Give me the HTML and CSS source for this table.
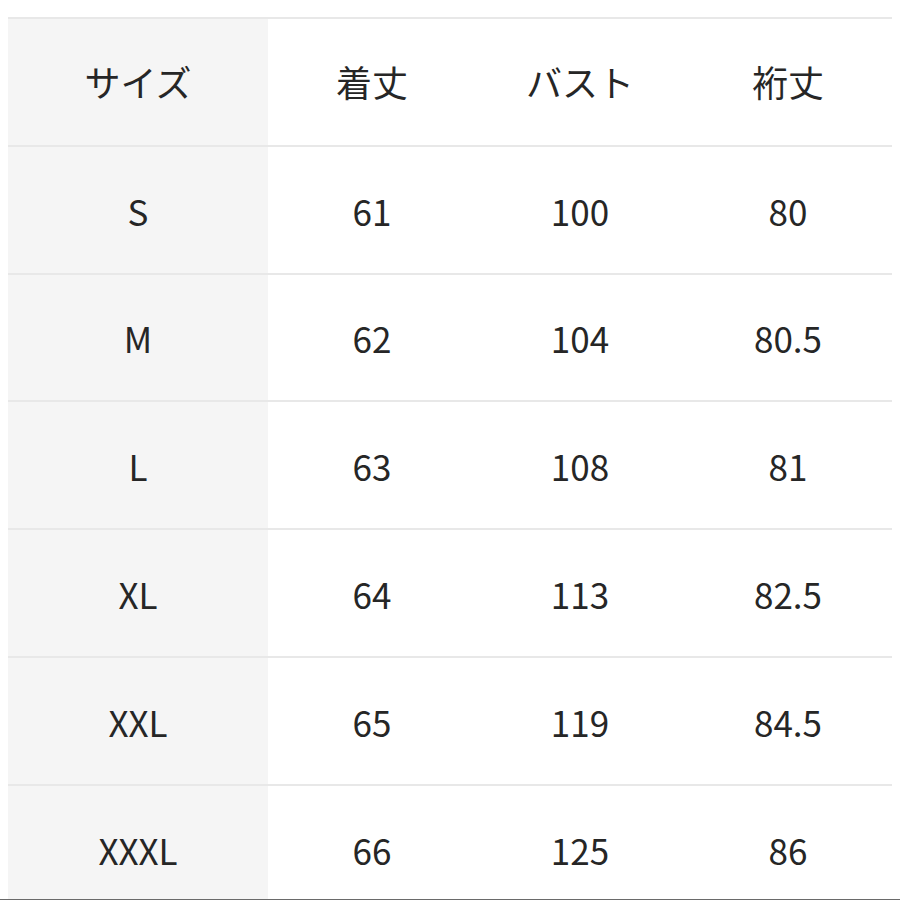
FILE: index.html
```html
<!DOCTYPE html>
<html lang="ja">
<head>
<meta charset="utf-8">
<link rel="stylesheet" href="styles.css">
</head>
<body>
<div class="table">
  <div class="row head"><div class="cell size">サイズ</div><div class="cell">着丈</div><div class="cell">バスト</div><div class="cell">裄丈</div></div>
  <div class="row"><div class="cell size">S</div><div class="cell">61</div><div class="cell">100</div><div class="cell">80</div></div>
  <div class="row"><div class="cell size">M</div><div class="cell">62</div><div class="cell">104</div><div class="cell">80.5</div></div>
  <div class="row"><div class="cell size">L</div><div class="cell">63</div><div class="cell">108</div><div class="cell">81</div></div>
  <div class="row"><div class="cell size">XL</div><div class="cell">64</div><div class="cell">113</div><div class="cell">82.5</div></div>
  <div class="row"><div class="cell size">XXL</div><div class="cell">65</div><div class="cell">119</div><div class="cell">84.5</div></div>
  <div class="row"><div class="cell size">XXXL</div><div class="cell">66</div><div class="cell">125</div><div class="cell">86</div></div>
</div>
<div class="edge"></div>
</body>
</html>
```
FILE: styles.css
```css
html, body {
  margin: 0;
  padding: 0;
  background: #ffffff;
  height: 900px;
  overflow: hidden;
}
body {
  font-family: "Noto Sans CJK JP", "Noto Sans", sans-serif;
  color: #262626;
}
.table {
  margin: 17px 8px 0 8px;
  width: 884px;
}
.row {
  display: grid;
  grid-template-columns: 260px 208px 208px 208px;
  height: 127.8px;
  box-sizing: border-box;
  border-top: 2px solid #e8e8e8;
}
.cell {
  display: flex;
  align-items: center;
  justify-content: center;
  font-size: 35px;
  line-height: 1;
  padding-top: 1px;
}
.head .cell {
  font-size: 36px;
  padding-top: 0;
  padding-bottom: 1px;
}
.size {
  background: #f5f5f5;
}
.edge {
  position: fixed;
  left: 0;
  right: 0;
  bottom: 0;
  height: 1px;
  background: #6a6a6a;
}
```
